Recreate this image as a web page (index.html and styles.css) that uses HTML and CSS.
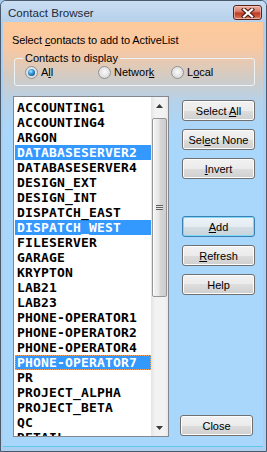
FILE: index.html
```html
<!DOCTYPE html>
<html>
<head>
<title>Contact Browser</title>
<link rel="stylesheet" href="styles.css">
</head>
<body>
<div class="window">
  <div class="titlebar">
    <span class="title">Contact Browser</span>
    <span class="close-x">
      <svg width="14" height="10" viewBox="0 0 14 10">
        <path d="M3 1.5 L11 8.5 M11 1.5 L3 8.5" stroke="#4a1a14" stroke-width="4.2" stroke-linecap="square"/>
        <path d="M3 1.5 L11 8.5 M11 1.5 L3 8.5" stroke="#ffffff" stroke-width="2.2" stroke-linecap="square"/>
      </svg>
    </span>
  </div>
  <div class="client">
    <div class="prompt">Select <u>c</u>ontacts to add to ActiveList</div>
    <fieldset class="group">
      <legend>Contacts to display</legend>
      <div class="radios">
        <span class="radio"><span class="dot checked"></span><span>A<u>l</u>l</span></span>
        <span class="radio"><span class="dot"></span><span>Networ<u>k</u></span></span>
        <span class="radio"><span class="dot"></span><span>L<u>o</u>cal</span></span>
      </div>
    </fieldset>
    <div class="main">
      <div class="listbox">
        <ul class="items">
          <li>ACCOUNTING1</li>
          <li>ACCOUNTING4</li>
          <li>ARGON</li>
          <li class="sel">DATABASESERVER2</li>
          <li>DATABASESERVER4</li>
          <li>DESIGN_EXT</li>
          <li>DESIGN_INT</li>
          <li>DISPATCH_EAST</li>
          <li class="sel">DISPATCH_WEST</li>
          <li>FILESERVER</li>
          <li>GARAGE</li>
          <li>KRYPTON</li>
          <li>LAB21</li>
          <li>LAB23</li>
          <li>PHONE-OPERATOR1</li>
          <li>PHONE-OPERATOR2</li>
          <li>PHONE-OPERATOR4</li>
          <li class="sel focus">PHONE-OPERATOR7</li>
          <li>PR</li>
          <li>PROJECT_ALPHA</li>
          <li>PROJECT_BETA</li>
          <li>QC</li>
          <li>RETAIL</li>
        </ul>
        <div class="scrollbar">
          <div class="arrow">
            <svg width="7" height="4" viewBox="0 0 7 4"><polygon points="3.5,0 7,4 0,4" fill="#3a3a3a"/></svg>
          </div>
          <div class="track">
            <div class="thumb"><span class="grip"></span></div>
          </div>
          <div class="arrow">
            <svg width="7" height="4" viewBox="0 0 7 4"><polygon points="0,0 7,0 3.5,4" fill="#3a3a3a"/></svg>
          </div>
        </div>
      </div>
      <div class="buttons">
        <button class="btn">Select <u>A</u>ll</button>
        <button class="btn">Sel<u>e</u>ct None</button>
        <button class="btn"><u>I</u>nvert</button>
        <button class="btn default gap"><u>A</u>dd</button>
        <button class="btn"><u>R</u>efresh</button>
        <button class="btn">Help</button>
        <button class="btn close">Close</button>
      </div>
    </div>
  </div>
</div>
</body>
</html>
```

FILE: styles.css
```css
body {
    margin: 0;
    font-family: "Liberation Sans", Arial, sans-serif;
    font-size: 11px;
    color: #000;
    background-color: #a6cbec;
}

.window {
    box-sizing: border-box;
    width: 267px;
    height: 452px;
    display: flex;
    flex-direction: column;
    background: #abcfee;
    border: 1px solid #4a5a6c;
    border-radius: 6px 6px 0 0;
    padding: 0 3px 4px 2px;
}

.titlebar {
    height: 21px;
    display: flex;
    align-items: center;
    justify-content: space-between;
    margin: 0 -3px 0 -2px;
    padding: 0 4px 0 7px;
    background: linear-gradient(#c9def3, #b6d0eb);
    border-radius: 5px 5px 0 0;
}

.title {
    font-size: 11.6px;
    color: #1e2a36;
    padding-top: 2px;
}

.close-x {
    box-sizing: border-box;
    width: 29px;
    height: 15px;
    margin-top: 2px;
    display: flex;
    align-items: center;
    justify-content: center;
    border: 1px solid #5a2219;
    border-radius: 3px;
    background: linear-gradient(#eab1a4 0%, #d8826f 40%, #c2391f 55%, #cc5a43 80%, #dd8a76 100%);
    box-shadow: inset 0 0 0 1px rgba(255, 220, 210, 0.5);
}

.close-x svg {
    display: block;
}

.client {
    flex: 1;
    padding: 11px 8px 8px 9px;
    background: linear-gradient(#fdca9c 0px, #f9c8a1 25px, #d2cbc4 55px, #b5d2ea 80px, #a9d7fc 110px, #a9d7fc 100%);
    border-bottom: 1px solid #5fc7ec;
}

.prompt {
    line-height: 14px;
    letter-spacing: -0.1px;
}

.group {
    margin: 4px 0 0 2px;
    padding: 0 6px 6px 10px;
    border: 1px solid rgba(240, 246, 250, 0.9);
    border-radius: 3px;
    min-width: 0;
}

.group legend {
    padding: 0 2px;
    margin-left: -2px;
    line-height: 14px;
}

.radios {
    display: flex;
    height: 14px;
    align-items: center;
}

.radio {
    width: 73px;
    display: flex;
    align-items: center;
    gap: 3px;
}

.dot {
    box-sizing: border-box;
    width: 13px;
    height: 13px;
    border-radius: 50%;
    border: 1px solid #8f9294;
    background: radial-gradient(circle at 50% 45%, #fbfbfb 0%, #e2e2e2 55%, #cfcfcf 100%);
    display: flex;
    align-items: center;
    justify-content: center;
}

.dot.checked::after {
    content: "";
    width: 7px;
    height: 7px;
    border-radius: 50%;
    background: radial-gradient(circle at 40% 35%, #b6ecff 0%, #3aa3e0 35%, #1a5f9c 70%, #0f3c6a 100%);
}

.main {
    display: flex;
    margin-top: 10px;
    flex: 1;
}

.listbox {
    box-sizing: border-box;
    width: 156px;
    height: 341px;
    margin-left: 1px;
    border: 1px solid #828790;
    background: #fff;
    display: flex;
}

.items {
    flex: 1;
    list-style: none;
    margin: 0;
    padding: 3px 0 0 1px;
    overflow: hidden;
    font-family: "DejaVu Sans Mono", monospace;
    font-weight: bold;
    font-size: 13px;
    letter-spacing: 0.17px;
}

.items li {
    box-sizing: border-box;
    height: 15px;
    line-height: 15px;
    padding-left: 2px;
    white-space: nowrap;
}

.items li.sel {
    background-color: #3399ff;
    color: #fff;
}

.items li.focus {
    outline: 1px dotted #f0a060;
    outline-offset: -1px;
}

.scrollbar {
    width: 17px;
    display: flex;
    flex-direction: column;
    background: linear-gradient(90deg, #e4e4e4, #f2f2f2 25%, #f2f2f2 80%, #e8e8e8);
}

.arrow {
    height: 17px;
    display: flex;
    align-items: center;
    justify-content: center;
}

.arrow svg {
    display: block;
}

.track {
    flex: 1;
    padding: 4px 1px 0 1px;
}

.thumb {
    box-sizing: border-box;
    height: 179px;
    border: 1px solid #959595;
    border-radius: 2px;
    background: linear-gradient(90deg, #f4f4f4, #e6e6e6 45%, #d6d6d6 55%, #cdcdcd);
    box-shadow: inset 1px 0 0 #ffffff;
    display: flex;
    align-items: center;
    justify-content: center;
}

.grip {
    width: 7px;
    height: 5px;
    background: repeating-linear-gradient(#5e5e5e 0, #5e5e5e 1px, #e8e8e8 1px, #e8e8e8 2px);
}

.buttons {
    display: flex;
    flex-direction: column;
    margin-left: 13px;
    padding-top: 4px;
    gap: 8px;
}

.btn {
    box-sizing: border-box;
    width: 73px;
    height: 21px;
    padding: 0;
    font-family: "Liberation Sans", Arial, sans-serif;
    font-size: 11px;
    color: #000;
    border: 1px solid #707070;
    border-radius: 3px;
    background: linear-gradient(#f2f2f2 0%, #ebebeb 50%, #dddddd 50%, #cfcfcf 100%);
    box-shadow: inset 0 0 0 1px #fcfcfc;
}

.btn.gap {
    margin-top: 29px;
}

.btn.default {
    border-color: #3c7fb1;
    box-shadow: inset 0 0 0 1px #7fd8f8;
    background: linear-gradient(#eef4f8 0%, #e4ecf1 50%, #d4dee5 50%, #c8d3db 100%);
}

.btn.close {
    margin-top: auto;
    margin-left: -2px;
    margin-bottom: 1px;
}
```
